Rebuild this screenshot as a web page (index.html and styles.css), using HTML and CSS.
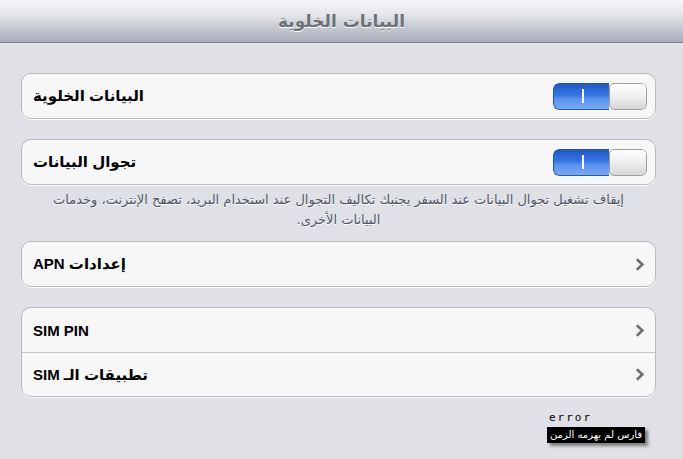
FILE: index.html
```html
<!DOCTYPE html>
<html lang="ar">
<head>
<meta charset="utf-8">
<title>البيانات الخلوية</title>
<link rel="stylesheet" href="styles.css">
</head>
<body>
<header class="navbar">
  <h1 class="nav-title" dir="rtl">البيانات الخلوية</h1>
</header>
<main class="content">
  <section class="group">
    <div class="row">
      <span class="label" dir="rtl">البيانات الخلوية</span>
      <span class="switch"><span class="switch-on"><span class="switch-bar"></span></span><span class="switch-knob"></span></span>
    </div>
  </section>
  <section class="group group-noted">
    <div class="row">
      <span class="label" dir="rtl">تجوال البيانات</span>
      <span class="switch"><span class="switch-on"><span class="switch-bar"></span></span><span class="switch-knob"></span></span>
    </div>
  </section>
  <p class="footnote" dir="rtl">إيقاف تشغيل تجوال البيانات عند السفر يجنبك تكاليف التجوال عند استخدام البريد، تصفح الإنترنت، وخدمات البيانات الأخرى.</p>
  <section class="group">
    <div class="row">
      <span class="label" dir="rtl">إعدادات APN</span>
      <svg class="chevron" width="10" height="13" viewBox="0 0 10 13"><path d="M1.8 1.2 L7.4 6.5 L1.8 11.8" fill="none" stroke="#707070" stroke-width="2.6"/></svg>
    </div>
  </section>
  <section class="group group-last">
    <div class="row">
      <span class="label" dir="ltr">SIM PIN</span>
      <svg class="chevron" width="10" height="13" viewBox="0 0 10 13"><path d="M1.8 1.2 L7.4 6.5 L1.8 11.8" fill="none" stroke="#707070" stroke-width="2.6"/></svg>
    </div>
    <div class="row row-sep">
      <span class="label" dir="rtl">تطبيقات الـ SIM</span>
      <svg class="chevron" width="10" height="13" viewBox="0 0 10 13"><path d="M1.8 1.2 L7.4 6.5 L1.8 11.8" fill="none" stroke="#707070" stroke-width="2.6"/></svg>
    </div>
  </section>
</main>
<div class="watermark">
  <div class="wm-error">error</div>
  <div class="wm-tag" dir="rtl">فارس لم يهزمه الزمن</div>
</div>
</body>
</html>
```
FILE: styles.css
```css
html, body {
  margin: 0;
  padding: 0;
}
body {
  width: 683px;
  height: 459px;
  overflow: hidden;
  background: #dfe1e6;
  font-family: "Liberation Sans", "DejaVu Sans", sans-serif;
  position: relative;
}
.navbar {
  height: 42px;
  border-bottom: 1px solid #7c8092;
  background: linear-gradient(#f5f6f8 0%, #e4e6ea 35%, #b8bcc5 80%, #a9adb7 100%);
  display: flex;
  align-items: center;
  justify-content: center;
}
.nav-title {
  margin: 0;
  font-size: 17px;
  font-weight: bold;
  color: #6d7179;
  text-shadow: 0 1px 0 #ffffff;
  font-family: "DejaVu Sans", sans-serif;
}
.content {
  padding: 30px 27px 0 21px;
}
.group {
  background: #f7f7f7;
  border: 1px solid #b8b9bd;
  border-radius: 10px;
  margin-bottom: 20px;
  box-shadow: 0 1px 0 #ffffff;
}
.group-noted,
.group-last {
  margin-bottom: 0;
}
.row {
  height: 44px;
  display: flex;
  align-items: center;
  justify-content: space-between;
  padding: 0 8px 0 11px;
}
.row-sep {
  border-top: 1px solid #c4c5c8;
  height: 43px;
}
.label {
  font-size: 15px;
  font-weight: bold;
  color: #000000;
  font-family: "Liberation Sans", "DejaVu Sans", sans-serif;
}
.switch {
  width: 94px;
  height: 27px;
  border-radius: 6px;
  display: flex;
  overflow: hidden;
  box-sizing: border-box;
}
.switch-on {
  width: 55px;
  background: linear-gradient(#1f58c8 0%, #3477e2 45%, #5b93ee 60%, #76a9f4 100%);
  border: 1px solid #2a56a8;
  border-right: none;
  border-radius: 6px 0 0 6px;
  display: flex;
  align-items: center;
  justify-content: center;
}
.switch-bar {
  width: 2px;
  height: 14px;
  background: #ffffff;
  margin-left: 2px;
}
.switch-knob {
  flex: 1;
  background: linear-gradient(#ffffff 0%, #eeeeee 50%, #d6d6d6 100%);
  border: 1px solid #9d9d9d;
  border-radius: 5px;
}
.chevron {
  display: block;
  margin-right: 2px;
}
.footnote {
  margin: 0 0 11px 0;
  padding: 5px 30px 0;
  font-family: "DejaVu Sans", sans-serif;
  font-size: 13px;
  line-height: 20px;
  color: #4f5567;
  text-align: center;
  text-shadow: 0 1px 0 #ffffff;
}
.watermark {
  position: absolute;
  left: 547px;
  top: 411px;
}
.wm-error {
  font-family: "DejaVu Sans Mono", monospace;
  font-size: 11px;
  letter-spacing: 2px;
  color: #000;
  padding-left: 2px;
  line-height: 13px;
}
.wm-tag {
  display: inline-block;
  margin-top: 1px;
  background: #000;
  color: #fff;
  font-family: "DejaVu Sans", sans-serif;
  font-size: 10px;
  line-height: 16px;
  padding: 0 3px;
  box-shadow: 3px 3px 3px rgba(0,0,0,0.45);
  white-space: nowrap;
}
```
